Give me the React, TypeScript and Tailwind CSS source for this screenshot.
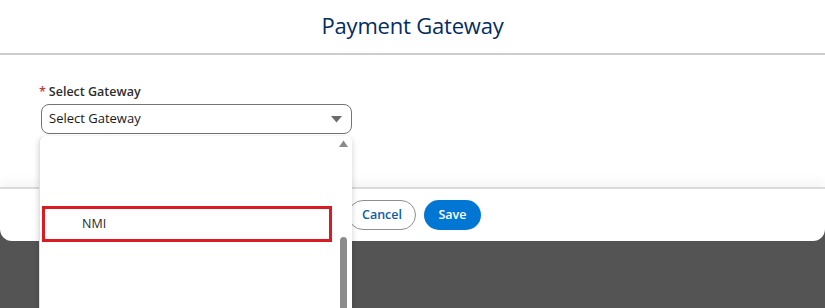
import React from 'react';

const font = { fontFamily: '"Open Sans", "Noto Sans", Arial, sans-serif' };

export default function App() {
  return (
    <div className="relative w-[825px] h-[308px] overflow-hidden bg-[#545454]" style={font}>
      <div className="bg-white rounded-b-[12px]">
        {/* header */}
        <div className="h-[55px] flex items-center justify-center border-b-2 border-[#cdcdcd]">
          <h2 className="text-[22px] leading-none text-[#032d60] tracking-[-0.2px] -mt-[4px]">Payment Gateway</h2>
        </div>

        {/* body */}
        <div className="h-[132px] px-[41px] pt-[28px]">
          <label className="flex items-center h-[18px] text-[12.5px] font-semibold text-[#2e2e2e]">
            <span className="text-[#c23934] mr-[3px] -ml-[2px]">*</span>
            Select Gateway
          </label>
          <div className="relative w-[311px] mt-[3px]">
            <div className="h-[30px] flex items-center justify-between pl-[7px] pr-[9px] border border-[#747474] rounded-[8px] bg-white">
              <span className="text-[13px] text-[#181818]">Select Gateway</span>
              <svg width="11" height="7" viewBox="0 0 11 7">
                <path d="M0 0 H11 L5.5 6.5 Z" fill="#6b6b6b" />
              </svg>
            </div>

            {/* open listbox */}
            <div className="absolute z-10 left-[-2px] top-[32px] w-[313px] h-[190px] bg-white rounded-t-[6px] border-l border-[#e2e2e2] shadow-[0_2px_6px_rgba(0,0,0,0.18)] flex">
              <div className="flex-1 pl-[2px] pt-[70px]">
                <div className="h-[36px] w-[290px] border-[3px] border-[#db1b21] flex items-center pl-[37px] text-[12.5px] text-[#2a2a2a]">
                  NMI
                </div>
              </div>
              <div className="w-[14px] flex flex-col items-center pt-[4px] pr-[3px]">
                <svg width="9" height="7" viewBox="0 0 9 7">
                  <path d="M0 7 H9 L4.5 0.5 Z" fill="#8a8a8a" />
                </svg>
                <div className="mt-[90px] w-[7px] flex-1 rounded-full bg-[#8c8c8c]" />
              </div>
            </div>
          </div>
        </div>

        {/* footer */}
        <div className="h-[54px] border-t-2 border-[#dadada] shadow-[0_-6px_10px_rgba(0,0,0,0.04)] rounded-b-[12px] flex items-center justify-center gap-[8px] pl-[4px]">
          <button className="h-[30px] w-[68px] rounded-full border border-[#8e8e8e] bg-white text-[12.5px] font-semibold text-[#0b5cab]">
            Cancel
          </button>
          <button className="h-[30px] w-[57px] rounded-full bg-[#0176d3] text-[12.5px] font-semibold text-white">
            Save
          </button>
        </div>
      </div>
    </div>
  );
}
